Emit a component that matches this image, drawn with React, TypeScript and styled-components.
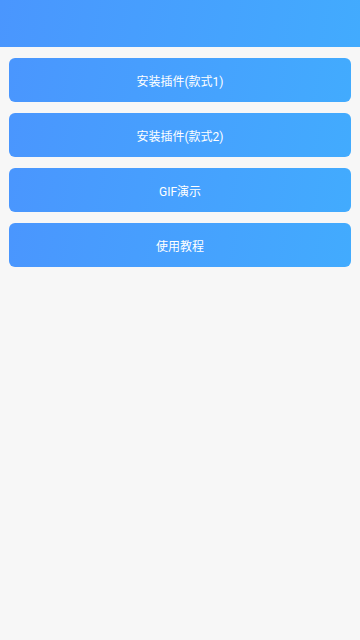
import React from "react";
import { createGlobalStyle, styled } from "styled-components";

const GlobalStyle = createGlobalStyle`
  html, body {
    margin: 0;
    padding: 0;
    background: #f7f7f7;
  }
  body {
    font-family: Roboto, "Noto Sans CJK SC", sans-serif;
  }
`;

const Page = styled.div`
  min-height: 640px;
  background: #f7f7f7;
`;

const Header = styled.div`
  height: 47px;
  background: linear-gradient(100deg, #4a96fe 0%, #42abfe 100%);
`;

const ButtonList = styled.div`
  display: flex;
  flex-direction: column;
  gap: 11px;
  padding: 11px 9px;
`;

const ActionButton = styled.button`
  height: 44px;
  border: none;
  border-radius: 6px;
  background: linear-gradient(100deg, #4a96fe 0%, #42abfe 100%);
  color: #fff;
  font-family: Roboto, "Noto Sans CJK SC", sans-serif;
  font-size: 12px;
  display: flex;
  align-items: center;
  justify-content: center;
  padding: 0;
  cursor: pointer;
`;

const items = ["安装插件(款式1)", "安装插件(款式2)", "GIF演示", "使用教程"];

const App = () => {
  return (
    <React.Fragment>
      <GlobalStyle />
      <Page>
        <Header />
        <ButtonList>
          {items.map((label) => (
            <ActionButton key={label}>{label}</ActionButton>
          ))}
        </ButtonList>
      </Page>
    </React.Fragment>
  );
};

export default App;
